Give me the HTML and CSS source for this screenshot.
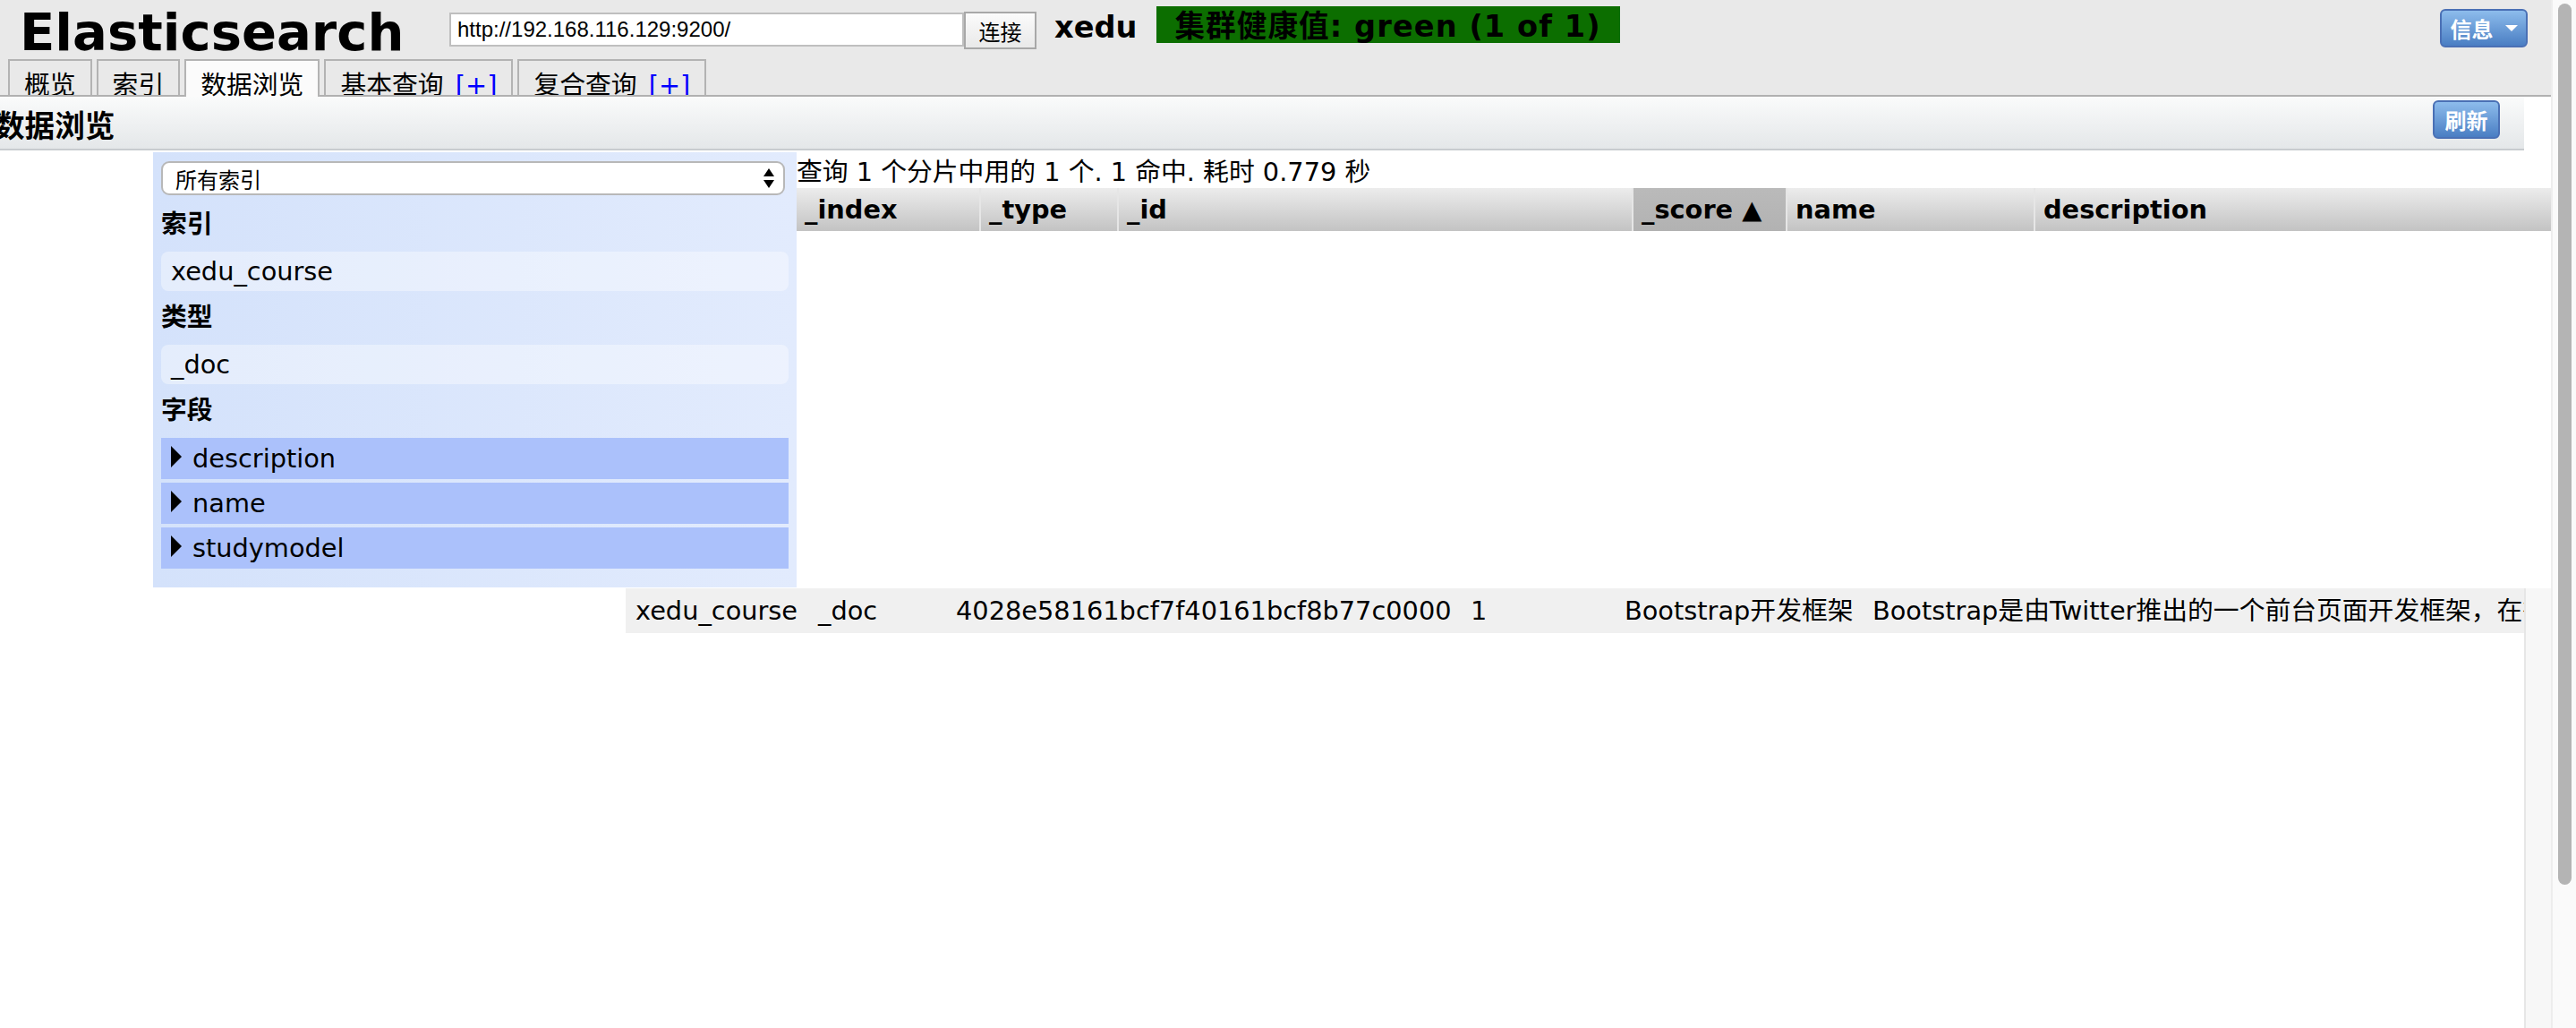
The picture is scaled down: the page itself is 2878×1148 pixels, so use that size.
FILE: index.html
```html
<!DOCTYPE html>
<html lang="zh">
<head>
<meta charset="utf-8">
<title>Elasticsearch</title>
<link rel="stylesheet" href="styles.css">
</head>
<body>
<div class="page">
  <header class="header">
    <div class="topbar">
      <h1 class="brand">Elasticsearch</h1>
      <input class="url" type="text" value="http://192.168.116.129:9200/">
      <button class="connect">连接</button>
      <span class="cluster">xedu</span>
      <span class="health">集群健康值: green (1 of 1)</span>
      <button class="blue-btn info-btn">信息<span class="caret"></span></button>
    </div>
    <nav class="tabs">
      <div class="tab">概览</div>
      <div class="tab">索引</div>
      <div class="tab active">数据浏览</div>
      <div class="tab">基本查询 <span class="plus">[+]</span></div>
      <div class="tab">复合查询 <span class="plus">[+]</span></div>
    </nav>
  </header>

  <div class="toolbar">
    <h2 class="toolbar-title">数据浏览</h2>
    <button class="blue-btn refresh">刷新</button>
  </div>

  <div class="browser">
    <aside class="filter">
      <div class="select">
        <span>所有索引</span>
        <svg class="select-arrows" width="12" height="24" viewBox="0 0 12 24"><path d="M0 10 L6 1 L12 10 Z M0 14 L6 23 L12 14 Z" fill="#000"/></svg>
      </div>
      <div class="filter-label">索引</div>
      <div class="filter-value">xedu_course</div>
      <div class="filter-label">类型</div>
      <div class="filter-value">_doc</div>
      <div class="filter-label">字段</div>
      <div class="fields">
        <div class="field"><span class="arrow"></span>description</div>
        <div class="field"><span class="arrow"></span>name</div>
        <div class="field"><span class="arrow"></span>studymodel</div>
      </div>
    </aside>
    <section class="results">
      <div class="summary">查询 1 个分片中用的 1 个. 1 命中. 耗时 0.779 秒</div>
      <div class="thead">
        <div class="th">_index</div>
        <div class="th">_type</div>
        <div class="th">_id</div>
        <div class="th sorted">_score ▲</div>
        <div class="th">name</div>
        <div class="th">description</div>
      </div>
    </section>
  </div>

  <div class="tbody-wrap">
    <div class="tbody">
      <div class="tr">
        <div class="td">xedu_course</div>
        <div class="td">_doc</div>
        <div class="td">4028e58161bcf7f40161bcf8b77c0000</div>
        <div class="td">1</div>
        <div class="td">Bootstrap开发框架</div>
        <div class="td">Bootstrap是由Twitter推出的一个前台页面开发框架，在行业之中使用较为广泛。此开发框架包含了大量的CSS、JS程序代码，可以帮助开发者（尤其是不擅长编写页面的开发者）轻松的实现一个不受浏览器限制的精美界面效果。</div>
      </div>
    </div>
    <div class="tbody-scroll"></div>
  </div>
</div>
<div class="vscroll"><div class="thumb"></div></div>
</body>
</html>
```

FILE: styles.css
```css
* { box-sizing: border-box; }
html, body { margin: 0; padding: 0; }
body {
  display: flex;
  width: 2878px;
  height: 1148px;
  overflow: hidden;
  font-family: "DejaVu Sans", "Noto Sans CJK SC", sans-serif;
  font-size: 28.8px;
  color: #000;
  background: #fff;
}

.page {
  width: 2850px;
  flex: none;
  display: flex;
  flex-direction: column;
}

/* page scrollbar */
.vscroll {
  flex: 1;
  background: #fafafa;
  border-left: 2px solid #ededed;
  padding: 4px 0 0 6px;
}
.thumb {
  width: 15px;
  height: 984px;
  border-radius: 8px;
  background: #b4b4b4;
}

/* header */
.header { background: #e9e9e9; }
.topbar {
  display: flex;
  align-items: flex-start;
  height: 66px;
}
.brand {
  margin: 8px 0 0 22px;
  width: 480px;
  flex: none;
  font-size: 57.6px;
  line-height: 57.6px;
  font-weight: bold;
}
.url {
  margin: 14px 0 0 0;
  width: 575px;
  height: 38px;
  border: 2px solid #bfbfbf;
  background: #fff;
  padding: 0 0 0 7px;
  font-family: "Liberation Sans", sans-serif;
  font-size: 24px;
  color: #000;
  outline: none;
}
.connect {
  margin: 13px 0 0 0;
  width: 81px;
  height: 42px;
  padding: 0;
  border: 2px solid #a8a8a8;
  background: linear-gradient(#fbfbfb, #e9e9e9);
  font-family: "Noto Sans CJK SC", sans-serif;
  font-size: 24px;
  color: #000;
}
.cluster {
  margin: 11px 0 0 20px;
  font-weight: bold;
  font-size: 33.6px;
  line-height: 40px;
}
.health {
  margin: 7px 0 0 22px;
  height: 41px;
  padding: 5px 21px 0 20px;
  line-height: 36px;
  background: #0c6e00;
  font-weight: bold;
  font-size: 33.6px;
  letter-spacing: 1.1px;
  white-space: nowrap;
}

.blue-btn {
  border: 2px solid #4a70b5;
  border-radius: 6px;
  background: linear-gradient(#8dbcec, #4a7ec3);
  color: #fff;
  font-family: "DejaVu Sans", "Noto Sans CJK SC", sans-serif;
  font-weight: bold;
  font-size: 24px;
  padding: 0;
  display: flex;
  align-items: center;
  justify-content: center;
}
.info-btn {
  margin: 10px 26px 0 auto;
  width: 98px;
  height: 43px;
  gap: 13px;
}
.caret {
  width: 0;
  height: 0;
  border-top: 7px solid #fff;
  border-left: 7px solid transparent;
  border-right: 7px solid transparent;
}

/* tabs */
.tabs {
  display: flex;
  align-items: flex-end;
  gap: 5px;
  padding-left: 9px;
  height: 42px;
  border-bottom: 2px solid #b1b1b1;
}
.tab {
  height: 40px;
  border: 2px solid #b3b3b3;
  border-bottom: none;
  padding: 10px 16px 0;
  line-height: 34px;
  overflow: hidden;
  white-space: nowrap;
  background: #e9e9e9;
}
.tab.active {
  height: 42px;
  margin-bottom: -2px;
  background: #fbfbfb;
  position: relative;
}
.plus { color: #0000ff; margin-left: 4px; }

/* toolbar */
.toolbar {
  width: 2820px;
  height: 60px;
  flex: none;
  border-bottom: 2px solid #c8cccf;
  background: linear-gradient(#fafbfb, #e4e7e9);
  display: flex;
  align-items: flex-start;
  justify-content: space-between;
}
.toolbar-title {
  margin: 14px 0 0 -6px;
  font-size: 33.6px;
  line-height: 40px;
  font-weight: bold;
}
.refresh {
  margin: 4px 27px 0 0;
  width: 75px;
  height: 43px;
}

/* browser */
.browser {
  display: flex;
  align-items: flex-start;
  flex: none;
}
.filter {
  margin: 2px 0 0 171px;
  width: 719px;
  flex: none;
  padding: 10px 9px 21px;
  background: linear-gradient(to right, #d4e2fb, #e2ebfd);
}
.select {
  width: 697px;
  height: 38px;
  margin-bottom: 10px;
  border: 2px solid #b8b8b8;
  border-radius: 9px;
  background: #fff;
  display: flex;
  align-items: center;
  justify-content: space-between;
  padding: 0 10px 0 14px;
  font-family: "Noto Sans CJK SC", sans-serif;
  font-size: 24px;
}
.select-arrows { display: block; }
.filter-label {
  height: 44px;
  line-height: 44px;
  font-weight: bold;
  margin-bottom: 9px;
}
.filter-value {
  height: 44px;
  line-height: 44px;
  border-radius: 8px;
  background: rgba(255, 255, 255, 0.38);
  padding-left: 11px;
  margin-bottom: 7px;
}
.fields {
  display: flex;
  flex-direction: column;
  gap: 4px;
}
.field {
  height: 46px;
  display: flex;
  align-items: center;
  background: #abc1fb;
  padding-left: 11px;
}
.arrow {
  width: 0;
  height: 0;
  border-left: 12px solid #000;
  border-top: 12px solid transparent;
  border-bottom: 12px solid transparent;
  margin: -4px 12px 0 0;
}

.results {
  flex: 1;
  min-width: 0;
  padding-top: 7px;
}
.summary {
  height: 34px;
  line-height: 34px;
  white-space: nowrap;
}
.thead {
  margin-top: 1px;
  height: 48px;
  display: grid;
  grid-template-columns: 204px 154px 575px 172px 277px 1fr;
  background: linear-gradient(#ececec, #c3c3c3);
}
.th {
  line-height: 48px;
  font-weight: bold;
  padding-left: 9px;
  border-left: 2px solid #e6e6e6;
  white-space: nowrap;
  overflow: hidden;
}
.th:first-child { border-left: none; }
.th.sorted { background: linear-gradient(#bababa, #b2b2b2); }

/* table body */
.tbody-wrap {
  flex: 1;
  min-height: 0;
  margin: 1px 0 0 699px;
  display: flex;
}
.tbody {
  flex: 1;
  min-width: 0;
  overflow: hidden;
}
.tr {
  display: grid;
  grid-template-columns: 204px 154px 575px 172px 277px max-content;
  width: max-content;
  min-width: 100%;
  height: 50px;
  background: #f0f0f0;
}
.td {
  line-height: 50px;
  padding-left: 11px;
  white-space: nowrap;
}
.tbody-scroll {
  width: 30px;
  flex: none;
  border-left: 2px solid #e6e6e6;
  background: #f7f7f7;
}
```
